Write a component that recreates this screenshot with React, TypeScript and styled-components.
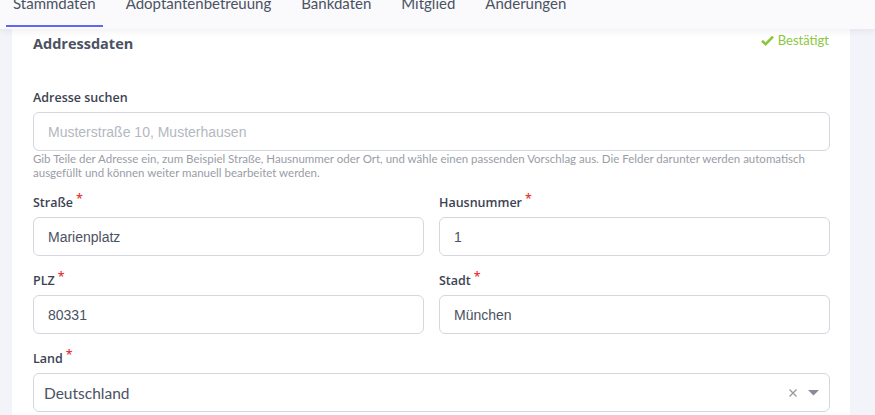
import React from 'react';
import styled, { createGlobalStyle } from 'styled-components';

const GlobalStyle = createGlobalStyle`
  html, body {
    margin: 0;
    padding: 0;
    background: #f3f4f9;
    font-family: 'Lato', 'Open Sans', sans-serif;
    overflow: hidden;
  }
`;

const Page = styled.div`
  width: 875px;
  height: 415px;
  overflow: hidden;
  background: #f3f4f9;
`;

const TabBar = styled.div`
  position: relative;
  z-index: 2;
  display: flex;
  gap: 16px;
  height: 29px;
  padding-left: 6px;
  background: #fafafd;
  box-shadow: 0 3px 6px rgba(30, 40, 80, 0.06);
  overflow: hidden;
`;

const Tab = styled.div<{ active?: boolean }>`
  padding: 0 7px;
  margin-top: -7px;
  font-size: 15px;
  line-height: 20px;
  color: #4b5262;
  white-space: nowrap;
  height: 34px;
  box-sizing: border-box;
  border-bottom: 2px solid ${(p) => (p.active ? '#6366f1' : 'transparent')};
`;

const Body = styled.div`
  display: flex;
  padding-left: 12px;
  padding-right: 25px;
  margin-top: -8px;
`;

const Card = styled.div`
  flex: 1;
  background: #fff;
  padding: 13px 20px 20px 21px;
`;

const CardHeader = styled.div`
  display: flex;
  justify-content: space-between;
  align-items: flex-start;
`;

const Title = styled.h3`
  margin: 0;
  font-family: 'Open Sans', sans-serif;
  font-size: 14.5px;
  font-weight: 700;
  color: #4b5262;
  line-height: 20px;
`;

const Status = styled.div`
  display: flex;
  align-items: center;
  gap: 4px;
  font-size: 13px;
  color: #8cc63f;
  line-height: 16px;
  margin-top: -2px;
  margin-right: 1px;
`;

const Field = styled.div`
  display: flex;
  flex-direction: column;
  min-width: 0;
`;

const SearchField = styled(Field)`
  margin-top: 36px;
`;

const Label = styled.label`
  font-family: 'Open Sans', sans-serif;
  font-size: 12.5px;
  font-weight: 600;
  color: #3c4252;
  line-height: 16px;
  margin-bottom: 6px;
`;

const Star = styled.span`
  color: #e53935;
  margin-left: 3px;
  position: relative;
  top: -4px;
`;

const Input = styled.div<{ placeholder?: boolean }>`
  box-sizing: border-box;
  height: 39px;
  border: 1px solid #d5d7de;
  border-radius: 6px;
  padding: 0 14px;
  display: flex;
  align-items: center;
  font-family: 'Liberation Sans', Arial, sans-serif;
  font-size: 14px;
  color: ${(p) => (p.placeholder ? '#b4b7c0' : '#4b5262')};
`;

const SelectBox = styled(Input)`
  padding: 0 10px;
  justify-content: space-between;
  font-family: 'Lato', sans-serif;
  font-size: 15.5px;
`;

const Value = styled.span``;

const Controls = styled.div`
  display: flex;
  align-items: center;
  gap: 10px;
`;

const Help = styled.p`
  margin: 1px 0 0;
  font-size: 11.5px;
  line-height: 14px;
  color: #9a9da6;
`;

const Row = styled.div`
  display: grid;
  grid-template-columns: 1fr 1fr;
  gap: 15px;
  margin-top: 17px;
`;

const FirstRow = styled(Row)`
  margin-top: 15px;
`;

const LandField = styled(Field)`
  margin-top: 17px;
`;

const Required = ({ text }: { text: string }) => (
  <Label>
    {text}
    <Star>*</Star>
  </Label>
);

const App = () => (
  <Page>
    <GlobalStyle />
    <TabBar>
      <Tab active>Stammdaten</Tab>
      <Tab>Adoptantenbetreuung</Tab>
      <Tab>Bankdaten</Tab>
      <Tab>Mitglied</Tab>
      <Tab>Änderungen</Tab>
    </TabBar>
    <Body>
      <Card>
        <CardHeader>
          <Title>Addressdaten</Title>
          <Status>
            <svg width="13" height="11" viewBox="0 0 13 11">
              <path d="M1 5.8 L4.6 9.2 L12 1.6" fill="none" stroke="#8cc63f" strokeWidth="2.6" />
            </svg>
            Bestätigt
          </Status>
        </CardHeader>

        <SearchField>
          <Label>Adresse suchen</Label>
          <Input placeholder>Musterstraße 10, Musterhausen</Input>
          <Help>
            Gib Teile der Adresse ein, zum Beispiel Straße, Hausnummer oder Ort, und wähle einen passenden
            Vorschlag aus. Die Felder darunter werden automatisch ausgefüllt und können weiter manuell
            bearbeitet werden.
          </Help>
        </SearchField>

        <FirstRow>
          <Field>
            <Required text="Straße" />
            <Input>Marienplatz</Input>
          </Field>
          <Field>
            <Required text="Hausnummer" />
            <Input>1</Input>
          </Field>
        </FirstRow>

        <Row>
          <Field>
            <Required text="PLZ" />
            <Input>80331</Input>
          </Field>
          <Field>
            <Required text="Stadt" />
            <Input>München</Input>
          </Field>
        </Row>

        <LandField>
          <Required text="Land" />
          <SelectBox>
            <Value>Deutschland</Value>
            <Controls>
              <svg width="10" height="10" viewBox="0 0 10 10">
                <path d="M1.5 1.5 L8.5 8.5 M8.5 1.5 L1.5 8.5" stroke="#9a9ca3" strokeWidth="1.4" />
              </svg>
              <svg width="11" height="6" viewBox="0 0 11 6">
                <path d="M0 0 H11 L5.5 5.5 Z" fill="#8a8c93" />
              </svg>
            </Controls>
          </SelectBox>
        </LandField>
      </Card>
    </Body>
  </Page>
);

export default App;
